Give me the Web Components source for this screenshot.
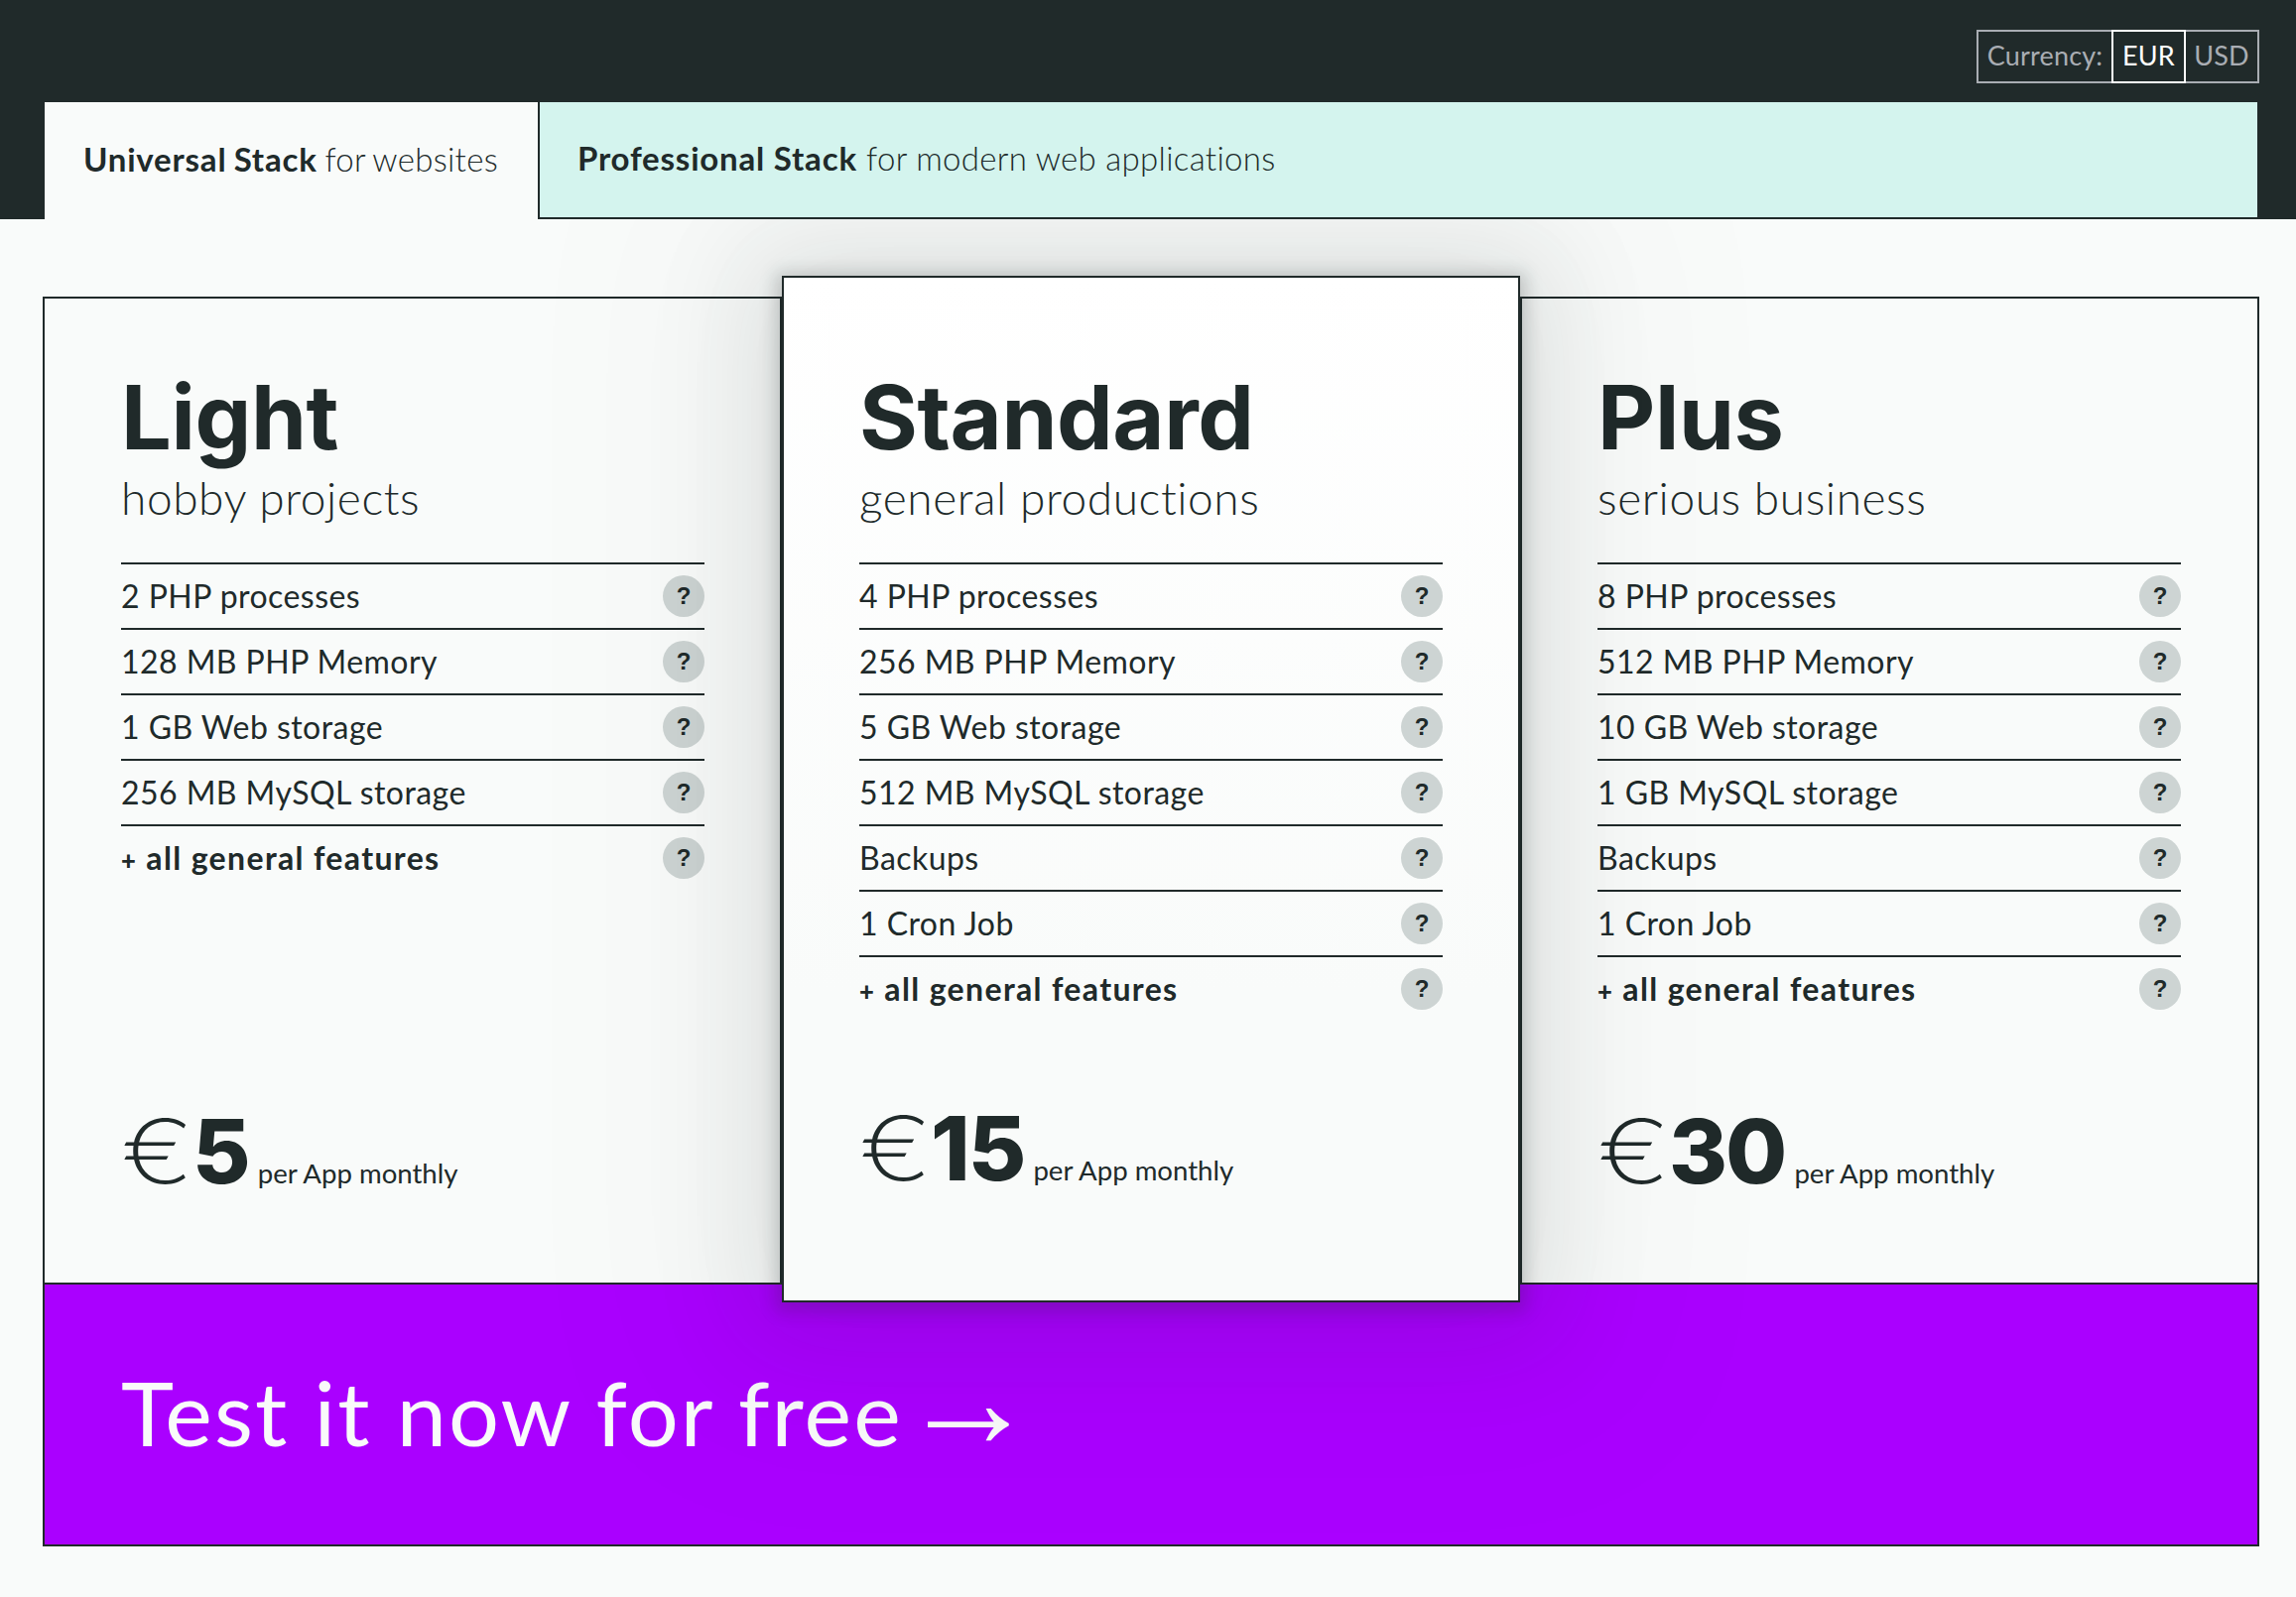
<!DOCTYPE html>
<html lang="en">
<head>
<meta charset="utf-8">
<title>Pricing</title>
<style>
html, body { margin: 0; padding: 0; }
body {
  width: 2314px;
  height: 1610px;
  overflow: hidden;
  background: #f9fbfa;
  color: #202a2a;
  font-family: Lato, "Liberation Sans", sans-serif;
}
plan-grid { margin: 78px 37px 0 43px; }
.plus { font-size: .8em; font-weight: 900; }
.gap { word-spacing: -19px; }
.arrow { font: 400 138px/0 "Liberation Sans", sans-serif; letter-spacing: 0; vertical-align: -1px; margin-left: -9px; }
</style>
</head>
<body>
<top-bar>
  <currency-switch slot="currency"></currency-switch>
  <stack-tab active><b>Universal Stack</b> for websites</stack-tab>
  <stack-tab><b>Professional Stack</b> for modern web applications</stack-tab>
</top-bar>

<plan-grid>
  <plan-card name="Light" tagline="hobby projects" amount="5">
    <feature-row>2 PHP processes</feature-row>
    <feature-row>128 MB PHP Memory</feature-row>
    <feature-row>1 GB Web storage</feature-row>
    <feature-row>256 MB MySQL storage</feature-row>
    <feature-row strong><span class="plus">+</span> all general features</feature-row>
  </plan-card>
  <plan-card featured name="Standard" tagline="general productions" amount="15">
    <feature-row>4 PHP processes</feature-row>
    <feature-row>256 MB PHP Memory</feature-row>
    <feature-row>5 GB Web storage</feature-row>
    <feature-row>512 MB MySQL storage</feature-row>
    <feature-row>Backups</feature-row>
    <feature-row>1 Cron Job</feature-row>
    <feature-row strong><span class="plus">+</span> all general features</feature-row>
  </plan-card>
  <plan-card name="Plus" tagline="serious business" amount="30">
    <feature-row>8 PHP processes</feature-row>
    <feature-row>512 MB PHP Memory</feature-row>
    <feature-row>10 GB Web storage</feature-row>
    <feature-row>1 GB MySQL storage</feature-row>
    <feature-row>Backups</feature-row>
    <feature-row>1 Cron Job</feature-row>
    <feature-row strong><span class="plus">+</span> all general features</feature-row>
  </plan-card>
</plan-grid>

<cta-banner>Test it now for free<span class="gap"> </span><span class="arrow">→</span></cta-banner>

<script>
// small helper, every element just stamps its own template
function makeTemplate(html) {
  const t = document.createElement('template');
  t.innerHTML = html;
  return t;
}

class Base extends HTMLElement {
  connectedCallback() {
    if (this.shadowRoot) return;
    const root = this.attachShadow({ mode: 'open' });
    root.appendChild(this.constructor.template.content.cloneNode(true));
    if (this.fill) this.fill(root);
  }
}

class TopBar extends Base {
  static template = makeTemplate(`
    <style>
      :host { display: block; position: relative; z-index: 3; background: #202a2a; height: 221px; }
      .cur { display: flex; justify-content: flex-end; height: 103px; padding: 30px 37px 0 0; box-sizing: border-box; }
      .tabs { display: flex; margin: 0 39px 0 45px; height: 118px; }
    </style>
    <div class="cur"><slot name="currency"></slot></div>
    <div class="tabs"><slot></slot></div>
  `);
}

class CurrencySwitch extends Base {
  static template = makeTemplate(`
    <style>
      :host { display: flex; height: 54px; font-size: 27px; letter-spacing: .2px; color: #a9adb3; box-sizing: border-box; border: 2px solid #a9adb3; }
      span { display: flex; align-items: center; justify-content: center; box-sizing: border-box; padding-bottom: 3px; }
      .label { width: 134px; }
      .on { width: 75px; margin: -2px 0; border: 2px solid #fff; color: #fff; }
      .off { width: 72px; }
    </style>
    <span class="label">Currency:</span>
    <span class="on">EUR</span>
    <span class="off">USD</span>
  `);
}

class StackTab extends Base {
  static template = makeTemplate(`
    <style>
      :host { display: flex; align-items: center; box-sizing: border-box; font-size: 33px; font-weight: 300; letter-spacing: .3px; color: #202a2a; padding: 0 0 4px 38px; background: #d4f4ee; border-left: 2px solid #202a2a; border-bottom: 2px solid #202a2a; flex: 1; }
      :host([active]) { flex: 0 0 497px; padding-left: 39px; background: #f9fbfa; border: 0; word-spacing: -1.5px; }
      ::slotted(b) { font-weight: 700; letter-spacing: .8px; }
    </style>
    <div><slot></slot></div>
  `);
}

class PlanGrid extends Base {
  static template = makeTemplate(`
    <style>
      :host { display: grid; grid-template-columns: 745px 744px 745px; height: 996px; }
    </style>
    <slot></slot>
  `);
}

class PlanCard extends Base {
  static template = makeTemplate(`
    <style>
      :host { display: flex; flex-direction: column; box-sizing: border-box; padding: 66px 76px 62px 77px; border: 2px solid #202a2a; border-bottom: 0; background: transparent; }
      :host(:last-child) { padding-left: 76px; padding-right: 77px; }
      :host([featured]) { position: relative; z-index: 2; margin: -21px 0 -18px; padding: 87px 76px 81px; border-bottom: 2px solid #202a2a; background: linear-gradient(#fff, #f9fbfa 70%);
        box-shadow: 0 3px 16px 6px rgba(32,42,42,.2), 0 6px 100px 30px rgba(32,42,42,.11), 0 0 200px 130px rgba(32,42,42,.025); }
      h2 { margin: 0; font: 700 90px/108px Inter, sans-serif; letter-spacing: -.4px; }
      p { margin: -1px 0 37px; font-size: 46px; line-height: 56px; font-weight: 300; letter-spacing: .6px; }
      .price { margin-top: auto; display: flex; align-items: baseline; line-height: 100px; }
      .cur { display: inline-block; width: 57px; font: 200 90px/100px Inter, sans-serif; transform: scaleX(1.2); transform-origin: 0 50%; }
      .amt { font: 800 90px/100px Inter, sans-serif; margin-left: 15px; letter-spacing: -2px; }
      .per { font-size: 27.6px; margin-left: 9px; }
    </style>
    <h2></h2>
    <p></p>
    <slot></slot>
    <div class="price"><span class="cur">€</span><span class="amt"></span><span class="per">per App monthly</span></div>
  `);
  fill(root) {
    root.querySelector('h2').textContent = this.getAttribute('name');
    root.querySelector('p').textContent = this.getAttribute('tagline');
    root.querySelector('.amt').textContent = this.getAttribute('amount');
  }
}

class FeatureRow extends Base {
  static template = makeTemplate(`
    <style>
      :host { display: flex; align-items: center; justify-content: space-between; box-sizing: border-box; height: 66px; border-top: 2px solid #202a2a; font-size: 32px; letter-spacing: .45px; }
      :host([strong]) { font-weight: 700; letter-spacing: 1.35px; }
      span { padding-bottom: 2px; }
      i { display: flex; align-items: center; justify-content: center; width: 42px; height: 42px; border-radius: 50%; background: #cdd4d3; font: 700 24px "Liberation Sans", sans-serif; letter-spacing: 0; }
    </style>
    <span><slot></slot></span>
    <i>?</i>
  `);
}

class CtaBanner extends Base {
  static template = makeTemplate(`
    <style>
      :host { display: flex; align-items: center; box-sizing: border-box; position: relative; z-index: 1; margin: -2px 37px 0 43px; height: 266px; padding: 0 0 6px 77px; border: 2px solid #202a2a; background: #aa00ff; color: #f9fbfa; font-size: 90px; font-weight: 400; letter-spacing: 2.1px; }
    </style>
    <div><slot></slot></div>
  `);
}

customElements.define('top-bar', TopBar);
customElements.define('currency-switch', CurrencySwitch);
customElements.define('stack-tab', StackTab);
customElements.define('plan-grid', PlanGrid);
customElements.define('plan-card', PlanCard);
customElements.define('feature-row', FeatureRow);
customElements.define('cta-banner', CtaBanner);
</script>
</body>
</html>
